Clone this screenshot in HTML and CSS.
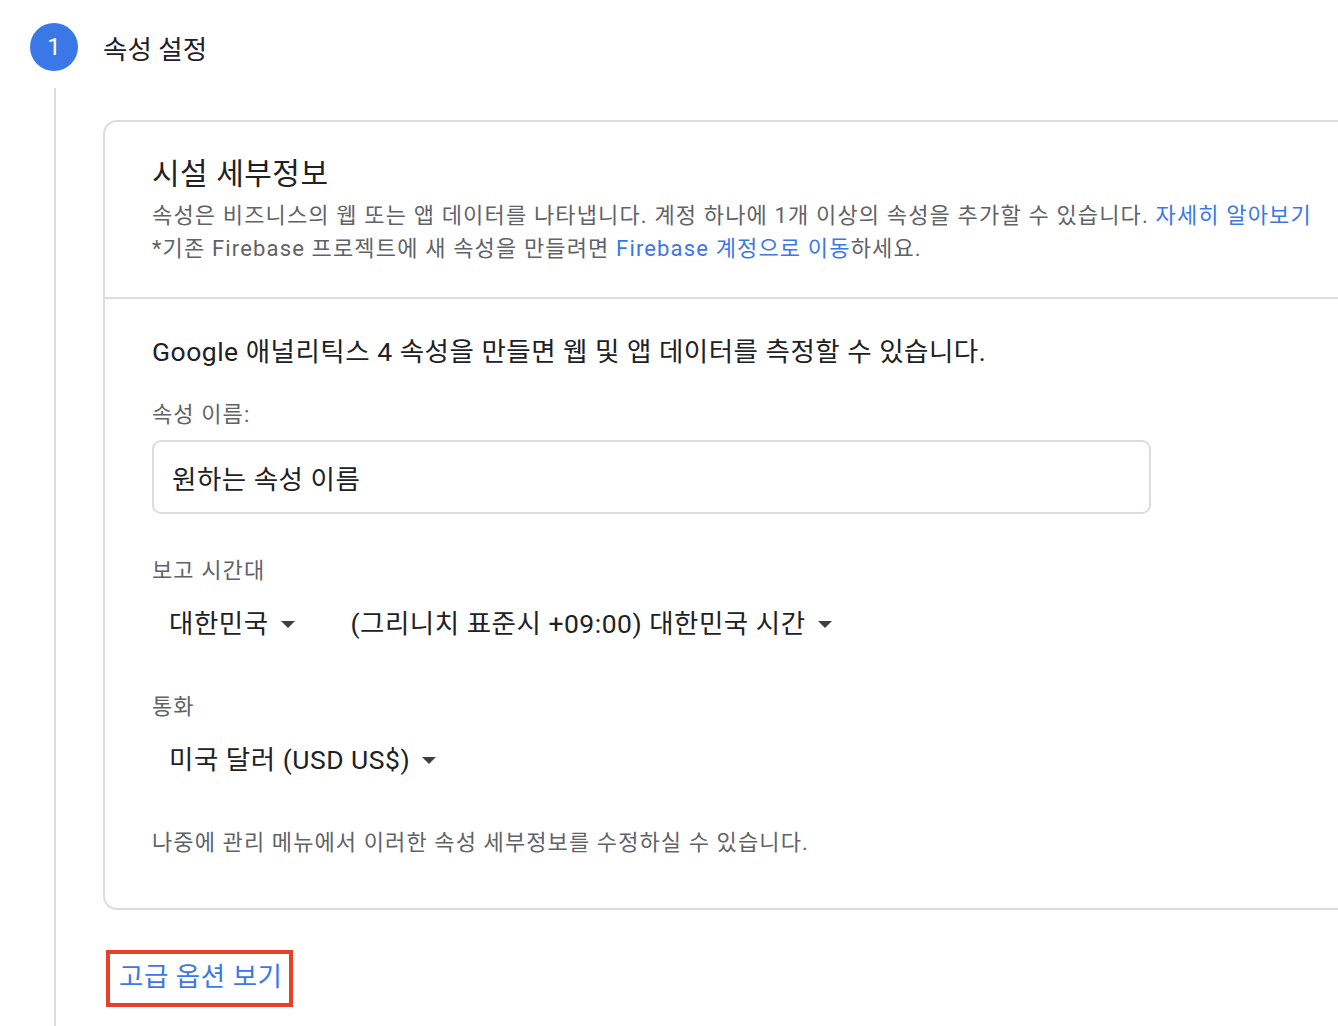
FILE: index.html
```html
<!DOCTYPE html>
<html lang="ko">
<head>
<meta charset="utf-8">
<link rel="stylesheet" href="styles.css">
</head>
<body>
<div class="page">
  <div class="step-header">
    <div class="step-num">1</div>
    <div class="step-title">속성 설정</div>
  </div>
  <div class="step-body">
    <div class="card">
      <div class="card-top">
        <h2 class="card-title">시설 세부정보</h2>
        <p class="desc">속성은 비즈니스의 웹 또는 앱 데이터를 나타냅니다. 계정 하나에 1개 이상의 속성을 추가할 수 있습니다. <a class="link">자세히 알아보기</a></p>
        <p class="desc">*기존 Firebase 프로젝트에 새 속성을 만들려면 <a class="link">Firebase 계정으로 이동</a>하세요.</p>
      </div>
      <div class="card-main">
        <p class="lead">Google 애널리틱스 4 속성을 만들면 웹 및 앱 데이터를 측정할 수 있습니다.</p>
        <div class="field">
          <div class="label">속성 이름:</div>
          <div class="input">원하는 속성 이름</div>
        </div>
        <div class="field tz">
          <div class="label">보고 시간대</div>
          <div class="selects">
            <div class="select">대한민국<span class="caret"></span></div>
            <div class="select">(그리니치 표준시 +09:00) 대한민국 시간<span class="caret"></span></div>
          </div>
        </div>
        <div class="field cur">
          <div class="label">통화</div>
          <div class="selects">
            <div class="select">미국 달러 (USD US$)<span class="caret"></span></div>
          </div>
        </div>
        <p class="note">나중에 관리 메뉴에서 이러한 속성 세부정보를 수정하실 수 있습니다.</p>
      </div>
    </div>
    <div class="adv">
      <a class="adv-link">고급 옵션 보기</a>
    </div>
  </div>
</div>
</body>
</html>
```

FILE: styles.css
```css
html, body {
  margin: 0;
  padding: 0;
  background: #fff;
  overflow: hidden;
}
body {
  font-family: Roboto, "Noto Sans CJK KR", sans-serif;
  color: #202124;
  width: 1338px;
  height: 1026px;
}
.page {
  padding-top: 23px;
}
.step-header {
  display: flex;
  align-items: center;
  padding-left: 30px;
  height: 48px;
}
.step-num {
  width: 48px;
  height: 48px;
  border-radius: 50%;
  background: #3b78e7;
  color: #fff;
  font-size: 24px;
  display: flex;
  align-items: center;
  justify-content: center;
}
.step-title {
  margin-left: 25px;
  font-size: 26.5px;
  color: #202124;
}
.step-body {
  margin-top: 17px;
  margin-left: 54px;
  border-left: 2px solid #dadce0;
  padding-left: 47px;
  padding-top: 32px;
  height: 1000px;
}
.card {
  width: 1300px;
  border: 2px solid #dadce0;
  border-radius: 14px;
}
.card-top {
  padding: 32px 47px 32px;
  border-bottom: 2px solid #dadce0;
}
.card-title {
  margin: 0 0 5px;
  font-size: 30px;
  letter-spacing: 0.5px;
  font-weight: 400;
  line-height: 40px;
  color: #202124;
}
.desc {
  margin: 0;
  font-size: 22px;
  letter-spacing: 1.15px;
  line-height: 33px;
  color: #5f6368;
}
.link {
  color: #3b78e7;
  text-decoration: none;
}
.card-main {
  padding: 35px 47px 50px;
}
.lead {
  margin: 0;
  font-size: 26.5px;
  letter-spacing: 0.5px;
  line-height: 36px;
  color: #202124;
}
.field {
  margin-top: 30px;
}
.label {
  font-size: 22px;
  letter-spacing: 1.1px;
  line-height: 30px;
  color: #5f6368;
}
.input {
  margin-top: 10px;
  width: 999px;
  height: 74px;
  box-sizing: border-box;
  border: 2px solid #dadce0;
  border-radius: 9px;
  padding: 0 18px;
  display: flex;
  align-items: center;
  font-size: 26.5px;
  letter-spacing: 0.5px;
  color: #202124;
}
.field.tz {
  margin-top: 42px;
}
.field.cur {
  margin-top: 50px;
}
.selects {
  display: flex;
  gap: 56px;
  margin-top: 20px;
  padding-left: 17px;
}
.select {
  font-size: 26.5px;
  letter-spacing: 0.5px;
  line-height: 36px;
  color: #202124;
  display: flex;
  align-items: center;
}
.caret {
  display: inline-block;
  width: 0;
  height: 0;
  margin-left: 12px;
  border-left: 7px solid transparent;
  border-right: 7px solid transparent;
  border-top: 7px solid #3c4043;
}
.note {
  margin: 50px 0 0;
  font-size: 22px;
  letter-spacing: 1.1px;
  line-height: 30px;
  color: #5f6368;
}
.adv {
  margin-top: 40px;
  margin-left: 3px;
}
.adv-link {
  display: inline-block;
  border: 4px solid #e8412a;
  padding: 8px 7px 11px 9px;
  font-size: 26.5px;
  letter-spacing: 0.5px;
  line-height: 30px;
  color: #3b78e7;
}
```
